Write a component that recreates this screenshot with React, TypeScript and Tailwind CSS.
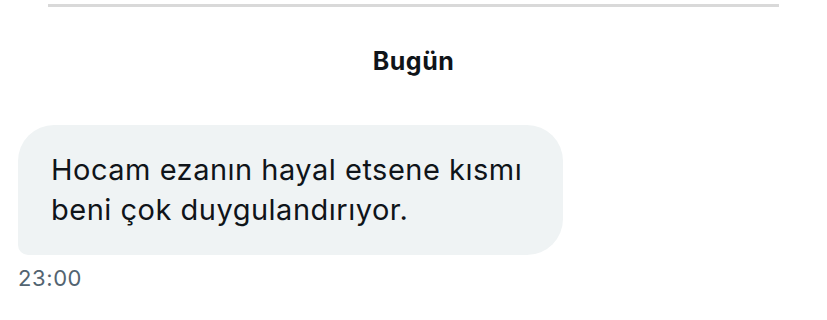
export default function App() {
  return (
    <div className="w-[827px] h-[320px] bg-white overflow-hidden" style={{ fontFamily: 'Inter, "Noto Sans", sans-serif' }}>
      {/* divider */}
      <div className="mx-[48px] h-[3px] mt-[4px] bg-[#d9d9d9]" />

      {/* day label */}
      <div className="flex justify-center mt-[38px]">
        <span className="text-[25px] leading-[32px] font-bold text-[#0f1419] tracking-[0.5px]">Bugün</span>
      </div>

      {/* message */}
      <div className="mt-[48px] pl-[18px] flex flex-col items-start">
        <div className="w-[545px] h-[130px] bg-[#eff3f4] rounded-tl-[36px] rounded-tr-[36px] rounded-br-[36px] rounded-bl-[10px] px-[33px] pt-[25px]">
          <p className="text-[29px] leading-[40px] text-[#0f1419] tracking-[0.5px]">
            Hocam ezanın hayal etsene kısmı
            <br />
            beni çok duygulandırıyor.
          </p>
        </div>
        <span className="mt-[10px] text-[22px] leading-[26px] text-[#536471] tracking-[0.6px]">23:00</span>
      </div>
    </div>
  );
}
